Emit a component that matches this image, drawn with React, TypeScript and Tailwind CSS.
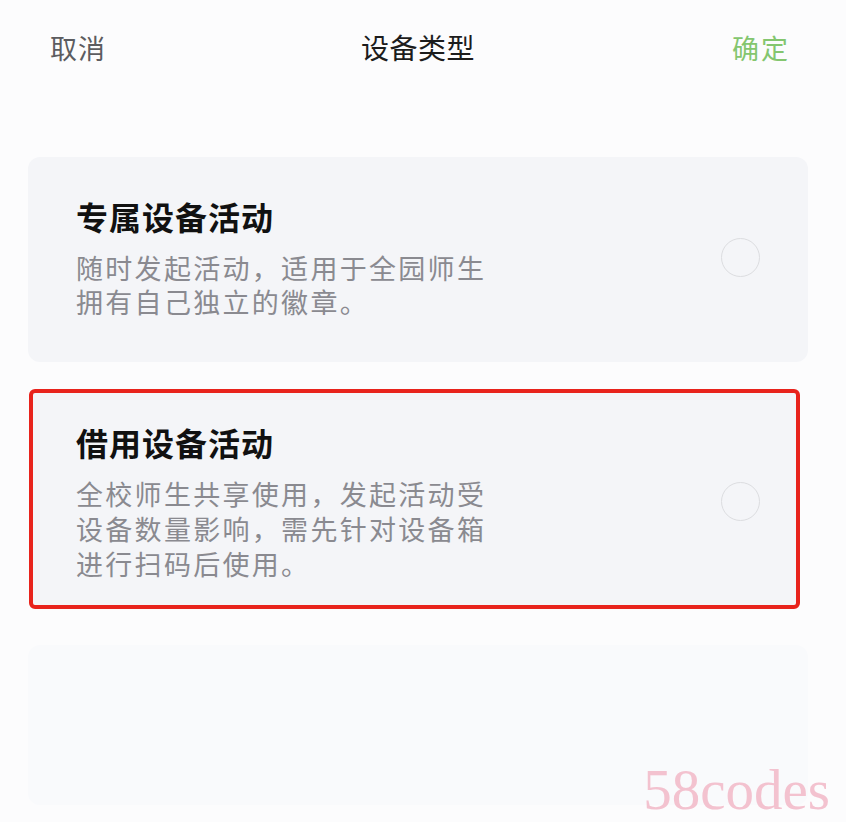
import React, { useState } from 'react';

interface Option {
  id: string;
  title: string;
  desc: string;
}

const options: Option[] = [
  {
    id: 'own',
    title: '专属设备活动',
    desc: '随时发起活动，适用于全园师生\n拥有自己独立的徽章。',
  },
  {
    id: 'borrow',
    title: '借用设备活动',
    desc: '全校师生共享使用，发起活动受\n设备数量影响，需先针对设备箱\n进行扫码后使用。',
  },
];

const font = { fontFamily: '"Noto Sans CJK SC", "Noto Sans", sans-serif' };

export default function App() {
  const [selected, setSelected] = useState<string | null>(null);

  return (
    <div
      className="relative w-[846px] h-[822px] bg-[#fcfcfd] overflow-hidden flex flex-col text-[#222]"
      style={font}
    >
      {/* header */}
      <div className="h-[96px] flex items-center justify-between pl-[50px] pr-[56px] pb-[2px] shrink-0">
        <button className="text-[27px] text-[#5c5c60] leading-none w-[60px] text-left tracking-[1px]">取消</button>
        <div className="text-[28px] text-[#1c1c1c] leading-none tracking-[0.5px]">设备类型</div>
        <button className="text-[27px] text-[#84c66f] leading-none w-[64px] text-right tracking-[2px]">确定</button>
      </div>

      <div className="flex flex-col pl-[28px] pt-[61px]">
        {/* card 1 */}
        <div
          onClick={() => setSelected('own')}
          className="w-[780px] h-[205px] rounded-[12px] bg-[#f4f5f8] flex items-center justify-between pl-[48px] pr-[48px] pb-[4px]"
        >
          <div className="flex flex-col">
            <div className="text-[32px] font-bold leading-[40px] tracking-[1px] text-[#111]">{options[0].title}</div>
            <p className="mt-[15px] text-[27px] leading-[34px] tracking-[2.3px] text-[#8a8a90] whitespace-pre-line">
              {options[0].desc}
            </p>
          </div>
          <Radio on={selected === 'own'} />
        </div>

        {/* card 2, highlighted */}
        <div
          onClick={() => setSelected('borrow')}
          className="mt-[27px] ml-[1px] w-[771px] h-[220px] rounded-[6px] border-[4px] border-[#e8231c] bg-[#f4f5f8] flex items-center justify-between pl-[43px] pr-[36px] pt-[4px]"
        >
          <div className="flex flex-col">
            <div className="text-[32px] font-bold leading-[40px] tracking-[1px] text-[#111]">{options[1].title}</div>
            <p className="mt-[14px] text-[27px] leading-[35px] tracking-[2.3px] text-[#8a8a90] whitespace-pre-line">
              {options[1].desc}
            </p>
          </div>
          <Radio on={selected === 'borrow'} />
        </div>

        {/* faint empty card */}
        <div className="mt-[36px] w-[780px] h-[160px] rounded-[12px] bg-[#f9fafc]" />
      </div>

      {/* watermark */}
      <span
        className="absolute right-[16px] bottom-[4px] text-[57px] leading-none text-[#f3c2cf]"
        style={{ fontFamily: '"Liberation Serif", serif' }}
      >
        58codes
      </span>
    </div>
  );
}

function Radio({ on }: { on: boolean }) {
  return (
    <div
      className={`w-[39px] h-[39px] rounded-full border-[1.5px] shrink-0 ${
        on ? 'border-[#84c66f] bg-[#84c66f]' : 'border-[#dcdde0] bg-transparent'
      }`}
    />
  );
}
